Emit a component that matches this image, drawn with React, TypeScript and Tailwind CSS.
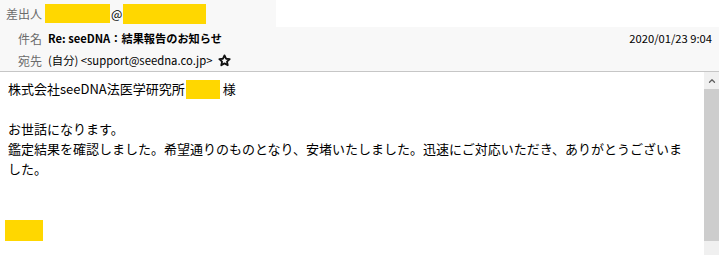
import React from 'react';
import { ChevronUp } from 'lucide-react';

const font = { fontFamily: '"Noto Sans CJK JP", "Noto Sans", sans-serif' };

function Mask({ className }: { className: string }) {
  return <span className={`inline-block bg-[#ffd700] align-middle ${className}`} />;
}

function Star() {
  return (
    <svg width="13" height="13" viewBox="0 0 24 24" className="ml-[5px]">
      <path
        d="M12 2.5l2.9 6.2 6.7.7-5 4.6 1.4 6.7L12 17.3l-5.9 3.4 1.4-6.7-5-4.6 6.7-.7z"
        fill="none"
        stroke="#111"
        strokeWidth="3.4"
        strokeLinejoin="round"
      />
    </svg>
  );
}

export default function App() {
  return (
    <div className="w-[719px] h-[255px] overflow-hidden bg-white text-black flex flex-col" style={font}>
      {/* header */}
      <div className="flex h-[27px]">
        <div className="w-[276px] bg-[#f8f8f8] flex items-center pl-[6px] text-[12px]">
          <span className="text-[#6b6b6b] mr-[3px]">差出人</span>
          <Mask className="w-[65px] h-[19px]" />
          <span className="mx-[1px]">@</span>
          <Mask className="w-[83px] h-[20px]" />
        </div>
        <div className="flex-1 bg-white" />
      </div>
      <div className="bg-[#f8f8f8] h-[23px] flex items-center pl-[18px] pr-[7px] text-[12px]">
        <span className="text-[#6b6b6b] mr-[6px]">件名</span>
        <span className="font-bold text-[11.2px]">Re: seeDNA：結果報告のお知らせ</span>
        <span className="ml-auto text-[11.2px]">2020/01/23 9:04</span>
      </div>
      <div className="bg-[#f8f8f8] h-[22px] flex items-center pl-[18px] text-[12px] border-b border-[#c6c6c6]">
        <span className="text-[#6b6b6b] mr-[6px]">宛先</span>
        <span className="text-[11.3px]">(自分) &lt;support@seedna.co.jp&gt;</span>
        <Star />
      </div>

      {/* body */}
      <div className="flex flex-1 min-h-0">
        <div className="flex-1 pl-[8px] pr-[12px] pt-[7px] text-[13px] leading-[20px]">
          <div className="flex items-center">
            <span>株式会社seeDNA法医学研究所</span>
            <Mask className="w-[34px] h-[19px] ml-[1px] mr-[3px]" />
            <span>様</span>
          </div>
          <div className="h-[20px]" />
          <p>お世話になります。</p>
          <p>
            鑑定結果を確認しました。希望通りのものとなり、安堵いたしました。迅速にご対応いただき、ありがとうございました。
          </p>
          <div className="h-[40px]" />
          <div className="-ml-[3px]">
            <Mask className="w-[38px] h-[21px]" />
          </div>
        </div>
        <div className="w-[15px] bg-[#f0f0f0] flex flex-col">
          <div className="h-[17px] flex items-center justify-center text-[#606060]">
            <ChevronUp size={10} strokeWidth={3} />
          </div>
          <div className="h-[152px] bg-[#cdcdcd]" />
        </div>
      </div>
    </div>
  );
}
